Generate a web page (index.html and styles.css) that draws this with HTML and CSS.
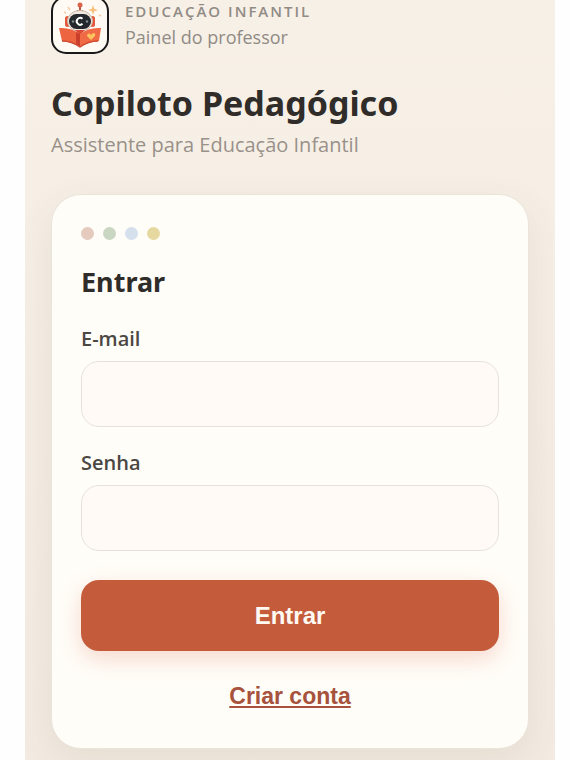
FILE: index.html
```html
<!DOCTYPE html>
<html lang="pt-BR">
<head>
  <meta charset="utf-8">
  <meta name="viewport" content="width=device-width, initial-scale=1">
  <title>Copiloto Pedagógico</title>
  <link rel="stylesheet" href="styles.css">
</head>
<body>
  <main class="page">
    <header class="header">
      <div class="brand">
        <div class="brand-logo">
          <svg viewBox="0 0 54 54" aria-hidden="true">
            <!-- antenna and sparkles -->
            <path d="M27 7v6M24 13h6" stroke="#b8452f" stroke-width="1.800"/>
            <circle cx="27" cy="7" r="2.500" fill="#d9644c"/>
            <path d="M40 7l1.200 3.800 3.800 1.200-3.800 1.200L40 17l-1.200-3.800L35 12l3.800-1.200z" fill="#f8c07c"/>
            <path d="M15 9l2 3M11 14l2 1M46 17l2 1" stroke="#f5cfa6" stroke-width="1.500"/>
            <!-- robot head -->
            <rect x="12" y="18" width="5" height="11" rx="2.500" fill="#e4573a"/>
            <rect x="37" y="18" width="5" height="11" rx="2.500" fill="#e4573a"/>
            <ellipse cx="27" cy="23" rx="12.500" ry="10.500" fill="#f2e8df" stroke="#c8b9ad"/>
            <rect x="16" y="16" width="22" height="15" rx="7.500" fill="#24282c"/>
            <path d="M29.500 20.800a3.400 3.400 0 1 0 0 5" fill="none" stroke="#fff" stroke-width="1.900"/>
            <circle cx="20" cy="23.500" r="1.200" fill="#7d8b92"/>
            <circle cx="34" cy="23.500" r="1.200" fill="#7d8b92"/>
            <path d="M22 32h10l-5 5z" fill="#d94a35"/>
            <!-- open book -->
            <path d="M6 30q12-1 21 6v13q-8-5-18-6z" fill="#ed6540"/>
            <path d="M48 30q-12-1-21 6v13q8-5 19-6z" fill="#f06b45"/>
            <path d="M27 36v13l-4-3V34z" fill="#c93f2c"/>
            <path d="M9 43q10 0 18 6 8-6 18-6" fill="none" stroke="#cf4a31" stroke-width="1.500"/>
            <path d="M38 42l-4-4q0-3 2.500-2.500L38 37l2-2q3 0 2 3z" fill="#ffc45d"/>
          </svg>
        </div>
        <div class="brand-text">
          <span class="brand-label">Educação Infantil</span>
          <span class="brand-role">Painel do professor</span>
        </div>
      </div>
      <h1 class="title">Copiloto Pedagógico</h1>
      <p class="subtitle">Assistente para Educação Infantil</p>
    </header>

    <section class="card">
      <div class="dots">
        <span class="dot dot-rose"></span>
        <span class="dot dot-green"></span>
        <span class="dot dot-blue"></span>
        <span class="dot dot-yellow"></span>
      </div>
      <h2 class="card-title">Entrar</h2>
      <form class="form">
        <div class="field">
          <label for="email">E-mail</label>
          <input type="email" id="email" autocomplete="email">
        </div>
        <div class="field">
          <label for="senha">Senha</label>
          <input type="password" id="senha" autocomplete="current-password">
        </div>
        <button type="submit" class="btn-primary">Entrar</button>
        <a href="#" class="link">Criar conta</a>
      </form>
    </section>
  </main>
</body>
</html>
```
FILE: styles.css
```css
* { box-sizing: border-box; }

body {
  margin: 0;
  padding: 0 15px 0 25px;
  background: #fefefe;
  color: #2f2c29;
  font-family: "Segoe UI", "Open Sans", sans-serif;
}

h1, h2 {
  font-family: "Segoe UI", "Noto Sans", sans-serif;
}

.page {
  max-width: 530px;
  min-height: 100vh;
  margin: 0 auto;
  padding: 0 26px 11px;
  background: linear-gradient(180deg, #f7f0e7, #f3ebe2);
  overflow: hidden;
}

/* Header */
.brand {
  display: flex;
  align-items: center;
  gap: 16px;
  margin-top: -4px;
}

.brand-logo {
  width: 58px;
  height: 58px;
  border: 2px solid #191919;
  border-radius: 15px;
  background: #fffaf4;
}

.brand-logo svg {
  display: block;
  width: 100%;
  height: 100%;
}

.brand-text {
  display: flex;
  flex-direction: column;
  color: #918b85;
}

.brand-label {
  font-size: 15px;
  font-weight: 600;
  line-height: 24px;
  letter-spacing: 2px;
  text-transform: uppercase;
}

.brand-role {
  font-size: 18px;
  line-height: 28px;
}

.title {
  margin: 25px 0 0;
  font-size: 34px;
  font-weight: 700;
  line-height: 48px;
}

.subtitle {
  margin: 4px 0 0;
  color: #999189;
  font-size: 20px;
  line-height: 28px;
}

/* Login card */
.card {
  margin-top: 35px;
  padding: 32px 29px 38px;
  border: 1px solid #ebe4db;
  border-radius: 30px;
  background: #fffdf8;
  box-shadow: 0 12px 36px rgba(93, 75, 48, 0.09);
}

.dots {
  display: flex;
  gap: 9px;
}

.dot {
  width: 13px;
  height: 13px;
  border-radius: 50%;
}

.dot-rose { background: #e5cabe; }
.dot-green { background: #c9d6c1; }
.dot-blue { background: #d5e0ed; }
.dot-yellow { background: #e6d99f; }

.card-title {
  margin: 24px 0 0;
  font-size: 27px;
  font-weight: 700;
  line-height: 36px;
}

.form {
  display: flex;
  flex-direction: column;
  margin-top: 25px;
}

.field {
  display: flex;
  flex-direction: column;
  gap: 8px;
  margin-bottom: 22px;
}

label {
  color: #4b4743;
  font-size: 20px;
  font-weight: 600;
  line-height: 28px;
}

input {
  width: 100%;
  height: 66px;
  padding: 0 20px;
  border: 1px solid #e7e1da;
  border-radius: 18px;
  background: #fffaf5;
  color: inherit;
  font: inherit;
  font-size: 20px;
}

input:focus {
  outline: none;
  border-color: #c45c3c;
}

.btn-primary {
  height: 71px;
  margin-top: 7px;
  border: none;
  border-radius: 18px;
  background: #c45c3c;
  color: #fff9f3;
  font-family: Arial, "Liberation Sans", sans-serif;
  font-size: 24px;
  font-weight: 700;
  cursor: pointer;
  box-shadow: 0 8px 22px rgba(216, 92, 60, 0.22);
}

.link {
  align-self: center;
  margin-top: 31px;
  color: #a6523c;
  font-family: Arial, "Liberation Sans", sans-serif;
  font-size: 23px;
  font-weight: 700;
  line-height: 28px;
  text-decoration: underline;
}
```
